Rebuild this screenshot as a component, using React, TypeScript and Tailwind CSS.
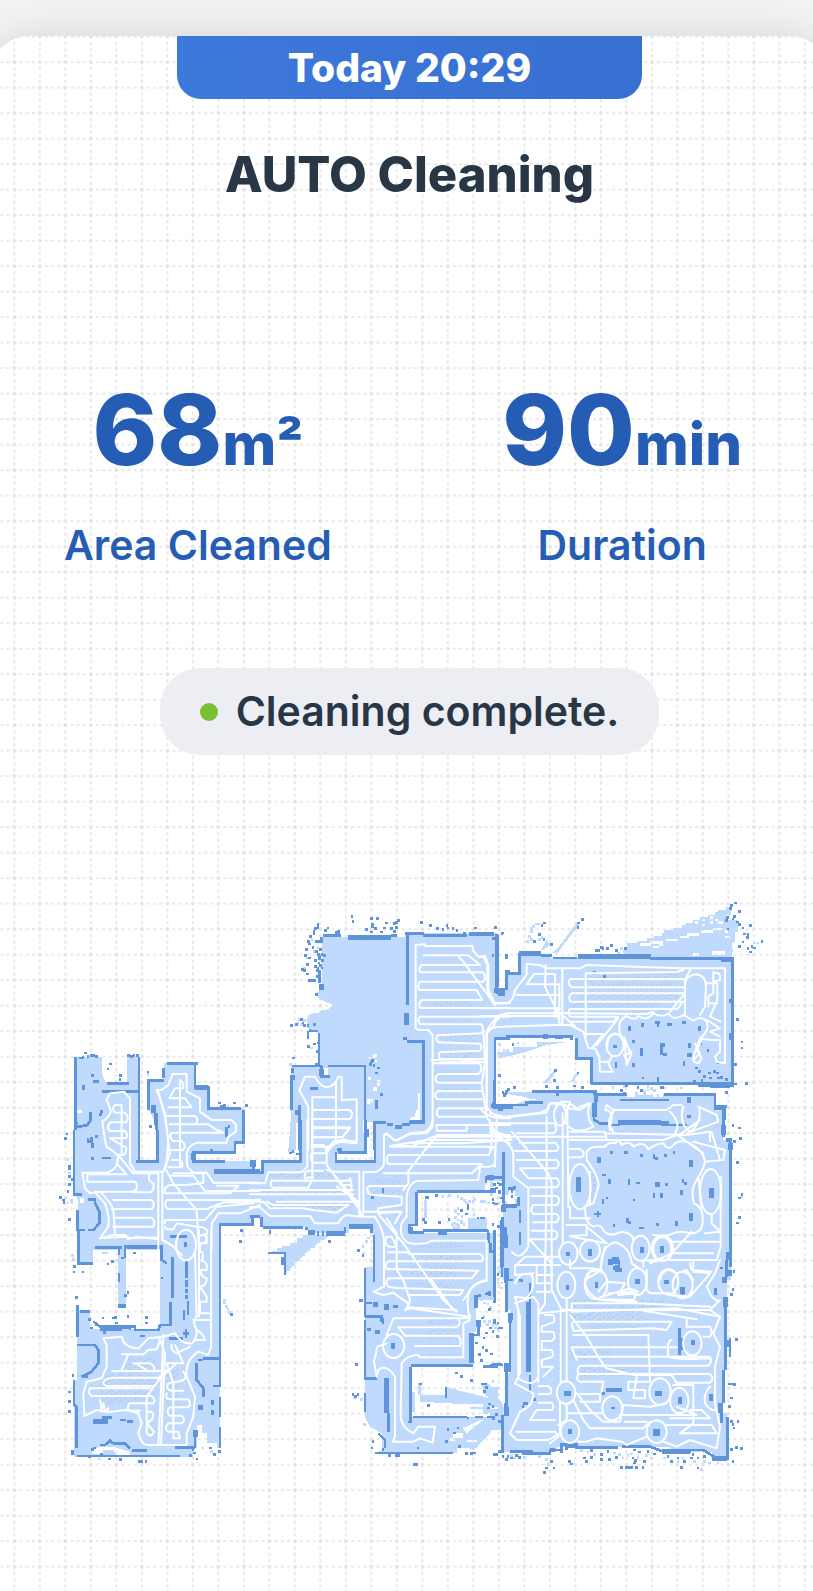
import React from "react";

type Tile = {
  x: number;
  y: number;
  floor: string;
  gaps?: string;
  walls: string;
  thick?: string;
  route: string;
  rings?: number[][];
  blocks?: number[][];
  cells?: number[][];
  haze?: number[][];
  hatch?: number[][];
};

// Every tile of the floor plan is drawn at three units per map pixel.
const tiles: Tile[] = [
  {
    x: 50,
    y: 1030,
    floor:
      "M75 82H155V130L165 155H230V82H270V394H322V290L295 235V152H343V100H435V170H475V235H580V340H555V368H430V394H610V425H660V560H612V583H510V660H80V600H85V510L75 492Z",
    gaps: "M75 240h22v8h-22zM75 595h10v8h-10zM90 505h12v14h-12zM298 285h10v30h-8z",
    walls:
      "M76 82V300M72 300V494H95M170 160H237M156 184H268M267 82V392M258 394H323V300M319 300V250M315 225v60M308 225v25M295 240V152H343M340 115v30M352 101H443M435 105V172H475V235H572M580 240V338H555V368H430V394H525M610 395v25M608 560V583M612 560H630M612 583H510V660M115 508H135V520L148 545V580L130 600H115M82 540V600H105M85 610V660M80 290H90L112 285L122 270V245M125 320v20M110 335h20M128 340v15M155 384h27M530 290v30M537 285v10M136 652H215M225 645v15M230 652H335M360 620H410M407 635v15",
    thick: "M492 424H630M435 172H475M430 370V390",
    route:
      "M97 428H170Q195 420 200 405L205 378Q190 360 170 352L165 330L157 275Q185 255 182 240L170 210L180 190L222 185L240 205V400L255 425H340L350 395L355 330L345 250L320 180M97 428L105 475L120 490L150 485Q185 520 190 540L195 615M112 430V455H255Q265 465 258 480L245 485H135M115 433H230L200 400M215 225V370M215 225H195Q182 235 195 248H225Q240 262 228 277H180Q168 292 180 303H225Q235 315 228 325H180L228 352Q230 370 220 375H205L250 430H325M190 510H305Q318 525 305 537H185M195 563H305Q318 575 310 590H190M298 435Q290 450 310 460Q315 480 300 487H245M150 625L175 590Q180 560 165 520L135 487M150 625L225 620L235 628L260 620L325 628M325 425V660M337 425V630L360 645M325 185L345 260L360 370L345 415M322 180L335 180L355 165L368 132H410V185L450 205V245L485 270H545L558 285V305L535 320L530 338H440Q415 345 410 370L412 410L430 428H470L490 458H630M390 150V410M390 150Q405 160 398 175H375L358 205H405L425 232H355M350 258H435Q450 270 435 283H360M370 283H475L500 300L520 308H365Q355 322 370 333H395Q410 345 400 360H365M365 390H390Q402 400 395 412H355M345 415L370 460L440 540L447 660M360 437H430L465 483H630M345 490Q340 470 360 465H410L460 458V430H370M345 490H540L565 467H500M350 510H630M350 510Q340 525 352 537H470L520 517H580L630 508M345 580Q340 568 355 570H465L500 530L610 520M345 590Q345 600 370 598L380 580L440 590Q475 590 472 610L450 618M485 660V580L505 550H570L630 525M470 618V640H450",
    rings: [[408, 645, 30, 46]],
    cells: [
      [103, 65], [110, 75], [120, 72], [128, 72], [135, 75], [87, 80], [95, 78], [232, 72], [240, 75], [248, 72], [258, 72],
      [123, 132], [130, 150], [138, 150], [97, 165], [97, 172], [178, 98], [170, 113], [208, 133], [206, 145], [290, 122],
      [42, 322], [47, 308], [55, 405], [55, 413], [55, 435], [62, 445], [55, 460], [50, 480], [28, 498], [36, 506], [38, 514],
      [55, 565], [505, 215], [520, 222], [510, 225], [550, 215], [585, 222], [298, 285], [480, 358], [150, 240], [570, 597],
      [568, 630], [135, 315], [110, 325], [75, 275], [148, 250], [123, 382],
    ],
    haze: [[50, 385], [55, 425], [42, 500], [50, 515], [62, 515], [60, 508], [290, 130], [530, 225], [575, 600]],
  },
  {
    x: 50,
    y: 1230,
    floor:
      "M82 0H510V655H430V680H72V450H80V240H120V298H330V55H228V225H205V55H130V100H85Z",
    gaps:
      "M125 672V660L150 650H190L240 665V675H200L190 660H160V672ZM442 585H455V610H470V640H500V655H440Z",
    walls:
      "M85 0V100H128M136 52H215M225 60V85M228 50H335V90L350 100M368 80V205M362 215V285H330L325 300H255V290H150L130 275M207 55v20M207 130v25M410 90V145M410 150v20M410 176v14M410 196v10M414 212V255M402 240v30M408 298v25M398 311h18M358 326h40M270 318h15M360 20H410M82 225V320M90 245h30M80 345H135L145 360V400L125 425L95 440H115M72 450V525L80 530V655M68 660V672H72M80 678H390M155 563h30M210 570h18M232 575h16M245 662h45M150 645H165L180 632L190 640H225L240 655M460 385H510M510 0V385M440 400V450L460 475V500M488 468H510M510 385V470M510 500v60M510 590v65M435 600V655M460 390H445M488 510v15M488 540v15M375 652h60M200 293h40M240 285v15",
    thick: "M130 575h45M205 228h22M445 532h14M150 295H215M437 600v20",
    route:
      "M150 25L190 15H225L240 25L325 22V0M337 0V30L365 45L395 75M435 70L440 260Q425 275 440 300Q440 330 425 340Q395 345 375 310L340 320L295 325L265 355Q235 355 220 335L215 320L160 325L170 345V410L155 445L110 455L100 490L103 558L140 540L165 545H180L230 540L265 550L275 580L265 610Q275 645 290 645H410V610L430 560L435 500L410 440Q405 390 445 365L475 375L483 350V0M447 0V260M447 15H465Q475 30 460 40H450V65Q465 65 455 92Q475 95 470 120H452Q450 140 470 145Q470 170 450 170L470 200V215L450 215V250H485M430 270H480M440 300Q460 310 465 330H435M340 315L335 440L325 645M328 325L345 370L333 645M187 423H330M250 400H300Q320 410 310 425M160 460Q160 445 190 443H325L350 420M160 462L170 468H310M120 475H300M120 475Q112 490 125 498H305Q320 510 310 520H238Q228 535 240 542H270M290 500L330 445L380 400M290 500V610Q305 625 312 605L295 585Q290 575 305 570Q315 555 305 545H295M235 373L215 420M215 373H280L295 360L320 358L330 330M260 402L290 420M150 510l5 30 5-20 5 25 10-10M365 345Q360 360 380 370L420 350M375 345L400 400H350M400 425Q420 450 380 455L355 460Q345 480 365 482H400M350 490Q345 508 360 508H415Q425 520 415 532H360Q345 545 360 557H395Q410 570 395 580H355Q340 595 355 605H385L390 625H370V460L350 400",
    cells: [
      [70, 105], [68, 122], [95, 122], [75, 198], [55, 482], [55, 510], [55, 541], [65, 433], [115, 265], [185, 260], [155, 260],
      [193, 258], [230, 255], [285, 258], [285, 275], [230, 183], [222, 192], [332, 140], [250, 65], [213, 80], [183, 90], [170, 98],
      [540, 250], [567, 32], [175, 683], [208, 684], [264, 691], [272, 691], [284, 691], [430, 665], [437, 683], [478, 650],
      [490, 670], [505, 660], [115, 675], [123, 655], [130, 650], [150, 670], [62, 662], [415, 650], [425, 655], [418, 672],
      [135, 280], [160, 303], [120, 290], [165, 285], [195, 275],
    ],
    haze: [[520, 208], [520, 215], [526, 226], [530, 234], [535, 243], [80, 435], [63, 73], [66, 85], [156, 65], [166, 65], [455, 650], [480, 660], [145, 683]],
    hatch: [[150, 430, 170, 90], [225, 380, 90, 40], [335, 400, 50, 130]],
  },
  {
    x: 250,
    y: 890,
    floor:
      "M215 140H465V130H742V300H780V440H735V650H780V780H370V695H350V780H115L122 700V530H207V430L170 412V392L175 375L190 370H205L215 360H230L245 350V343L232 338L205 325L200 310L215 295V250V140Z",
    gaps:
      "M350 628h18v8l-10 6h-8zM368 492h14v24h-8v-12h-8zM356 500h8v8h-8zM355 562h8v8h-8zM370 592h10v10h-10zM382 570h8v18h-8zM510 610V690H478L484 680H495L498 660H504V610ZM137 700h8v80h-8zM220 535h13v22h-10zM340 690h8v40h-8z",
    walls:
      "M220 137H272M422 137H440M465 130H522M473 130V345M520 137H650M742 135V290M769 300V245H780M458 445h12M472 454H520V698H478M372 780V697H408M410 704h20M435 712h20M455 704h20M127 528H215M235 528H345V740M127 535V550M124 560V660M215 528V560H240M207 430V525M148 645V780M140 660v15M180 596h25M208 240v40M735 655V445H780M380 630v28M262 778h15M182 423h22",
    thick:
      "M295 143H422M658 132H732M733 300H765M745 310h20M469 370v35M215 283v16M215 538v20M128 556v14M350 718v22M728 648H765M745 655h15M255 131h15",
    route:
      "M497 165V415L505 420H535L548 435V690Q540 720 525 725L480 730L435 752L410 732L402 735V780M497 165L525 163V168H668V180L685 200H700L712 225V300L730 340H780M522 196H655L690 225H515Q503 237 512 247H700Q710 262 700 275H510Q500 288 508 300H680L697 330H515Q503 342 510 354H780M625 200L640 215L735 345M780 380H510Q500 392 510 403H695Q703 417 695 430L562 436Q555 445 565 457L690 461Q698 470 690 482L570 487Q562 495 570 507H705M545 510L620 508L705 517H570M548 520H690Q700 540 685 552H565Q550 565 562 578H690M695 603H565Q548 615 562 628H695M565 655H700M565 655Q555 668 565 680H710M780 370Q740 375 730 410L710 430V650Q720 670 750 685H780M700 420L705 520L695 580L710 680L750 750M560 705H780M560 705V722H650V705M525 780L560 740H780M420 768H490L550 740M490 760H640L780 750M725 780V700M165 560H195Q210 590 230 592Q255 590 265 560H275V630L320 628V755L280 750L250 755L230 780M165 560L148 600L175 650V780M187 780V622H258M258 580V750M187 660H300Q312 672 300 687H185M187 712H300L278 742H187M187 770H240",
    cells: [
      [200, 100], [200, 108], [192, 112], [188, 120], [230, 110], [222, 118], [262, 120], [302, 75], [305, 90], [360, 82], [378, 82],
      [364, 98], [364, 106], [345, 115], [372, 112], [405, 95], [400, 110], [430, 97], [442, 87], [436, 94], [420, 112], [435, 108],
      [360, 122], [390, 122], [430, 120], [510, 93], [537, 103], [558, 112], [575, 115], [587, 103], [590, 110], [605, 112], [617, 118],
      [640, 126], [672, 110], [732, 108], [755, 125], [172, 150], [174, 158], [178, 135], [188, 127], [196, 150], [204, 150], [210, 150],
      [210, 142], [185, 168], [165, 175], [162, 193], [175, 200], [168, 220], [153, 235], [160, 238], [168, 248], [175, 268], [183, 268],
      [190, 268], [192, 225], [200, 230], [208, 222], [214, 208], [205, 195], [195, 180], [208, 175], [205, 203], [212, 190], [220, 193],
      [198, 238], [193, 208], [203, 215], [212, 230], [195, 310], [120, 402], [135, 400], [150, 385], [155, 395], [160, 403], [170, 403],
      [190, 400], [170, 423], [176, 418], [170, 432], [170, 440], [172, 465], [190, 458], [200, 455], [197, 480], [203, 500], [127, 500],
      [195, 518], [725, 192], [726, 142], [360, 512], [358, 520], [368, 522], [364, 508], [375, 545], [390, 610], [382, 530], [745, 552],
      [755, 603], [765, 600], [772, 595], [760, 612], [375, 648], [765, 192], [765, 200], [203, 245], [198, 255], [205, 262], [201, 190],
    ],
    haze: [[182, 145], [188, 180], [200, 170], [168, 200], [160, 230], [145, 385], [150, 400], [140, 395], [160, 388], [180, 470], [740, 485], [748, 490], [758, 478], [768, 478], [118, 520], [376, 502]],
    hatch: [[550, 330, 120, 26], [510, 378, 150, 10], [570, 430, 110, 30], [560, 485, 110, 30], [560, 540, 110, 10], [560, 590, 100, 10]],
  },
  {
    x: 480,
    y: 890,
    floor:
      "M0 130H50V300H80V250H120V190H180L215 205H520V205H757V585H335V505H288V440H45V650H80V605H350V612H705V655H735V690H0ZM432 182V172H440V160H470V152H500V145H523V137H545V129H553V121H580V113H607V105H615V98H638V90H660V82H683V75H706V67H714V60H737V52H752V75H737V90H775V125H765V150L755 200H440ZM218 190L240 165L290 98L298 104L250 165L232 190ZM183 180L200 150L210 165L190 180ZM50 485H100V470H170V455H270L200 465L130 488L60 505ZM190 578L222 540L230 546L200 580ZM272 575L290 548L294 556L276 578Z",
    gaps:
      "M480 160h30v-7h40v8h-36v6h-34zM520 168h16v-8h14v8h-14v7h-16zM600 137h20v-8h36v8h-28v6h-28zM558 146h36v7h-36zM664 128v-9h36v9zM700 120v-7h30v7zM645 93h9v8h-9zM667 101h8v8h-8zM668 86h8v8h-8zM690 94h8v8h-8zM706 86h8v8h-8zM690 79h10v7h-10zM713 94h16v8h-16zM735 120h8v8h-8zM755 160h8v16h-8zM735 137h16v7h-16zM640 190h18v8h-18zM695 184h40v12h-40zM80 612L130 620L150 626H185L130 634L85 650H66L75 630ZM90 215h14v24h-14z",
    walls:
      "M50 132V295M80 300V250H118V190M183 196H215M218 204H290M510 205H757M757 205V590M680 586H755M335 580H650M334 583V505H290V445M275 450V440H78M45 640V445H75M100 645H140M145 637H185M157 604H350M233 610v8M340 612H435M552 614H705V650H740M420 630H565M347 620v60M340 640v40M627 620v20M735 650v40",
    thick: "M0 132H42M42 303H75M48 305h27M118 190H183M295 199H512M722 209h40M753 328v12M753 430v20M40 643v12M50 650H100M225 441h25M190 439h15M655 585h20M690 586h60",
    route:
      "M0 200L15 198L25 225V300L45 340H80Q100 335 105 300L120 280L140 255V222L180 225L200 235H300L320 225L600 235H735V520L710 515L705 500L720 485V450H690L660 445L640 500Q635 515 655 520L665 505L650 480L665 450M420 430Q410 390 440 378Q465 395 475 378Q500 395 520 370Q550 385 565 370Q580 395 610 375L640 392Q665 375 680 395Q690 420 665 440M420 430L435 470L440 525L455 490L430 450M432 440L450 490L432 495L445 515M645 460L660 490L640 510M385 520L398 545H360L358 500L345 475H325L310 425L270 405H230L65 410Q25 410 20 430V660M0 355H240M0 378H230M20 425Q30 400 60 375L80 370H270L500 372L520 365M140 283L162 252H225V380M140 283H240M110 315H240M197 225L195 290L230 360L240 405M247 235V405M238 285V400M317 250V440M317 250L590 246L610 240M340 470L370 432H320M350 465L415 385M270 267H610M270 267Q260 280 275 292H612M612 310H275Q262 322 272 335H610M605 335Q600 352 590 357H270Q262 365 270 380H415L400 395H270M240 370L285 408M615 375V280Q620 255 650 253Q680 260 678 290L675 350L660 375M570 365L615 310V270L630 240M700 245V310L685 320V350M700 250Q720 245 720 260V270L705 275M680 280H712V330L690 380L722 395M690 340H712M680 390L720 415L690 425L720 440M0 655Q20 680 50 683L180 668L200 660L210 640L245 640L265 650L270 640L290 655L325 640M360 515H385M380 480L385 445Q400 425 420 435M395 500L385 520",
    rings: [[405, 465, 26, 34]],
    blocks: [
      [445, 407, 8, 16], [483, 400, 8, 10], [525, 393, 14, 8], [530, 403, 8, 8], [561, 400, 14, 8], [605, 393, 14, 8], [655, 408, 8, 16],
      [398, 466, 14, 8], [455, 450, 10, 8], [480, 475, 8, 24], [541, 460, 14, 10], [541, 470, 8, 26], [549, 490, 12, 8], [625, 460, 8, 14],
      [655, 450, 10, 14], [622, 490, 14, 10], [404, 517, 8, 16], [457, 520, 8, 12], [608, 512, 8, 16], [530, 560, 8, 16], [485, 560, 8, 8],
      [340, 243, 8, 8], [355, 245, 8, 8], [370, 255, 8, 8],
    ],
    cells: [
      [42, 108], [62, 127], [35, 192], [38, 142], [190, 95], [182, 103], [175, 130], [160, 150], [188, 145], [303, 85], [292, 95], [290, 108],
      [210, 160], [345, 178], [352, 178], [360, 168], [365, 172], [378, 172], [390, 162], [405, 178], [432, 172], [762, 35], [750, 42],
      [748, 52], [775, 60], [738, 78], [735, 88], [755, 83], [760, 75], [768, 92], [775, 100], [785, 110], [790, 128], [800, 130], [808, 103],
      [798, 138], [785, 152], [775, 165], [812, 165], [820, 170], [842, 150], [808, 182], [800, 172], [740, 113], [768, 385], [782, 452],
      [755, 462], [782, 470], [762, 520], [95, 460], [223, 537], [55, 552], [290, 545], [220, 568], [303, 588], [228, 588], [65, 603],
      [72, 608], [420, 598], [480, 598], [430, 605], [545, 588], [735, 603], [565, 575], [645, 530], [655, 540], [670, 555], [685, 545],
      [700, 540], [708, 545], [710, 515], [680, 478], [720, 558], [735, 565], [662, 568], [688, 560], [640, 570], [712, 560],
    ],
    haze: [[165, 98], [172, 98], [157, 105], [150, 112], [150, 120], [145, 135], [138, 150], [150, 145], [182, 138], [175, 145], [430, 180], [420, 172], [412, 185], [480, 596], [490, 600], [500, 596], [520, 598], [465, 606], [395, 588], [820, 155], [830, 155], [55, 460], [110, 455], [80, 600], [550, 590]],
    hatch: [[400, 240, 200, 20], [320, 258, 270, 14], [330, 280, 260, 10], [300, 300, 300, 30], [270, 335, 270, 22], [460, 355, 110, 16]],
  },
  {
    x: 250,
    y: 1120,
    floor:
      "M0 158H38V125H152V0H347V98H258V125H372V0H780V60H758V182H705V213H500V313H480V340H735V540H345V440H370V318H298V340H175V322H38V290H0ZM160 345H240L232 353H225V360H210V368H202V376H195V384H180V392H172V399H165V407H157V415H150V422H142V430H134V438H126V445H119V453H112V462H105V400H65V392H80V384H95V377H120V370H142V353H160ZM655 295H710V328H655ZM523 240h8v55h-8zM115 95L122 0H130V95ZM760 90H780V540H765Z",
    walls:
      "M0 125h15v15M0 158H38V125H152V0M375 7V125H258V95M265 98H347V0M372 7H405M410 14h20M435 20h20M460 14h20M480 4h40M760 95V250M757 290V440M708 190V172H755M500 215H735V205M500 215V315M480 318V338H523M525 332H710M714 330V370M722 370v30M735 330V540M0 290H30M35 290V322M40 322H160M60 330v12M170 320v10M285 340V320M372 345V485M345 445V540M55 399H105V465M97 410v25",
    thick: "M175 338H195M200 340h6M215 340h8M228 340h57M298 320H368M565 338h25M350 30v20M760 255v22M768 345v40M482 320v16M710 172h22M8 128v14",
    route:
      "M0 190H45L55 157H155L172 140V0M187 0V165M187 75H220Q235 90 225 100H187M187 25H300L275 52H187M185 100Q178 120 190 128H225M258 0V65M320 0V70L270 65Q235 75 230 105V135L340 285M230 150L245 155H328V285M340 155V275H450M340 157L380 155Q400 145 402 130V45L410 40Q430 60 440 62L480 42L530 40L548 20V0M65 182H300M65 182Q58 195 68 203H175L190 170L165 175Q160 155 175 152H220M0 210H310M0 223H310M300 175Q310 200 300 215M265 185L300 180M270 195H305M260 200L325 245H80M0 245H40L60 265H160L190 270L260 278L295 255H70L50 245M0 262H30L60 288H180L195 310H265Q275 290 290 285L330 290L375 290Q400 330 402 360V500L370 515L400 525L430 518L460 540M240 150L320 245L335 290M355 215Q345 205 360 198H470M355 215Q350 222 370 225L455 230V255L385 265Q380 280 400 300L460 370L580 540M385 280L455 275L440 300L435 310M410 295L440 340V450L460 480L480 540M410 350H425L440 380H415Q400 370 410 350M400 160H665L695 132H415Q405 120 415 105H715Q725 95 720 80H420M420 78L530 60H780M470 160L560 45H780M740 0L735 135L720 140H690L685 180L500 183Q475 190 470 230V290Q445 310 455 345Q465 370 490 372L530 370L545 362H710V480Q670 485 655 520L640 540M475 165V190L460 210M415 397H470L490 407M485 402H690Q705 412 695 424H415M415 424Q400 435 412 447L685 452L665 475H415Q403 490 415 500L440 504L640 510L630 525H480M720 0L725 40L780 70",
    blocks: [[395, 203, 8, 16]],
    cells: [
      [234, 360], [322, 388], [335, 402], [525, 228], [530, 228], [516, 295], [523, 303], [565, 303], [593, 295], [555, 222], [650, 253],
      [650, 262], [645, 278], [630, 268], [680, 290], [690, 290], [698, 290], [727, 245], [363, 228], [328, 537], [708, 515], [685, 522],
      [715, 520], [117, 95], [125, 90], [138, 98], [740, 185], [748, 190], [745, 210], [730, 190],
    ],
    haze: [[620, 262], [612, 270], [622, 278], [632, 285], [612, 288], [620, 296], [630, 300], [610, 305], [622, 312], [604, 310], [638, 310], [612, 320], [640, 238], [630, 232], [645, 245], [620, 225], [655, 240], [665, 240], [670, 235], [690, 240], [700, 240], [712, 245], [668, 280], [575, 225], [595, 222], [745, 440], [745, 455], [740, 475], [750, 485], [345, 360], [352, 350]],
    hatch: [[60, 160, 210, 12], [30, 206, 270, 18], [60, 240, 230, 30], [370, 178, 80, 12], [370, 210, 80, 16], [490, 365, 150, 20], [490, 400, 150, 22], [480, 430, 140, 40], [490, 490, 130, 20]],
  },
  {
    x: 350,
    y: 1220,
    floor:
      "M72 0H178V38H435V210L405 215L378 225V335H362V437H182V590H430V600L400 650L380 685H320V700H75L95 690V640L60 620L45 590V145H70ZM210 525H285V500L330 512L400 530L455 545L465 575L400 582V552H330L210 545ZM395 490H415L440 525L455 550H430L400 520ZM183 515h12v60h-12zM390 600H440L420 640L370 690L345 680ZM204 490h10v35h-10zM360 562h80v6h-80z",
    gaps: "M310 640h30v14h-30zM340 625L390 600H400L350 640ZM300 655h16v8h-16zM350 660h30v7h-30zM325 685h14v8h-14z",
    walls:
      "M0 18H65V40M72 45V185M45 145V290M45 290H95V305M45 300V475H82M45 520V575M178 38V15H200V0M220 31H415M415 38V70M422 70v30M435 50V235M385 300V345H370M182 437H370M400 440H435M435 434H455M182 440V605M190 591H350M375 591h25M410 591h20v8M455 0V140M480 280V455M470 455V585M457 590V700M475 180h15M115 580V635M75 699H310M85 640L105 660V685M130 699h20M288 500v35M392 492h20",
    thick: "M0 20H65M378 225V265M385 300V320M364 340V428M110 475V580M265 38h25M468 150v40M135 704h15M180 602v6M480 280v30M470 560v28",
    route:
      "M160 240Q185 250 165 270L180 265L360 290M170 262L320 270M130 295H360V285M130 295L110 345M145 322L165 347H325Q335 362 330 378H195M145 322H320Q335 310 325 295M110 370L82 380L72 425L80 470L85 450Q110 430 135 470V650L128 665H190L210 655L248 668L255 620L205 620L190 640Q150 620 152 580L155 430Q170 405 205 405L210 412H340V310L360 300Q345 240 360 210Q380 185 410 183M180 240L175 262M280 240L320 275M245 180L310 272",
    rings: [[131, 378, 32, 36]],
    blocks: [[70, 246, 14, 14], [103, 253, 14, 16], [130, 255, 14, 8], [122, 370, 14, 16], [75, 330, 14, 12], [50, 325, 14, 8], [45, 245, 20, 8], [95, 295, 8, 16]],
    cells: [
      [22, 88], [32, 238], [15, 430], [5, 520], [20, 520], [12, 525], [62, 680], [65, 660], [200, 680], [190, 730], [196, 730], [290, 625],
      [286, 660], [320, 620], [310, 635], [325, 675], [345, 697], [370, 695], [360, 697], [405, 218], [415, 212], [430, 240], [415, 265],
      [393, 290], [430, 298], [418, 320], [450, 320], [440, 305], [405, 335], [395, 378], [405, 388], [420, 398], [385, 400], [390, 418],
      [375, 365], [398, 350], [330, 465], [315, 455], [360, 478], [208, 488], [232, 553], [405, 498], [400, 510], [430, 700], [445, 690],
      [115, 703], [415, 548], [412, 560], [425, 555], [95, 685], [455, 705], [350, 590], [435, 700],
    ],
    haze: [[410, 248], [418, 258], [400, 300], [408, 310], [415, 300], [425, 310], [433, 320], [398, 285], [390, 235], [400, 245], [445, 150], [450, 165], [440, 185], [450, 200], [40, 610], [35, 75], [38, 95], [10, 530], [330, 5], [315, 10], [322, 18], [308, 18], [30, 535], [425, 480], [440, 500]],
    hatch: [[230, 295, 100, 16], [230, 320, 90, 40], [220, 372, 110, 10], [230, 400, 90, 10], [190, 262, 120, 10]],
  },
  {
    x: 490,
    y: 1080,
    floor:
      "M0 80H60V70L120 65L150 60V40H675V85H700V180H722V600H38V375H45V290H0ZM0 300h8v20h-8z",
    gaps:
      "M60 325h8v8h8v16h8v8h-8v18H52V362h-6V345h10ZM410 40H520V50H490V44H435V50H410ZM680 85h8v8h-8z",
    walls:
      "M12 0V75M50 75H110V68H158M127 34H320M320 43H410M522 43H675V85H700V170M390 60H536M302 10H720V20M312 70V120L330 130H360M362 135H390M535 135H590M722 175V560M42 215V375M0 292H40M85 350V378M90 390V430M90 455V495M36 505V590M14 450V600M55 325h20",
    thick: "M5 72h12M10 80h40M645 13h75M312 72v24M318 45v20M385 128H512M512 130h25M597 50v20M597 105v10M700 135v30M708 180h14M722 190v20M715 515V540M718 570v18M35 378H80M44 440V505M265 290V335M664 325v30M50 565v35M8 325v10",
    route:
      "M0 100L50 112L170 98L180 70L205 72L215 65H240L235 85L270 90L300 70Q285 110 310 140Q250 170 225 125M0 130H200M0 155Q30 155 50 170H340M0 145L65 180M65 155L175 280L185 310V600M0 180H40Q70 200 70 225V290L115 325V500Q90 545 65 515M0 205L15 200V260M170 110V290L165 600M218 100V490M232 80L235 380M80 160H190Q205 150 195 135M90 188H195Q212 200 200 213H75M80 240H200Q212 252 200 265H90L115 295H200Q215 308 200 322H120M125 348H200Q215 360 200 375H130Q118 390 130 402H200Q212 412 200 427H130M125 452H195Q210 465 195 478H120M120 480L190 555M75 560L105 530H210M75 555H210M75 555V585L130 580M240 155H345L350 180H240M240 207H270Q290 220 275 232H235M290 215Q300 200 320 200L345 200Q355 185 375 190Q390 175 395 195Q420 180 430 200Q460 180 475 208Q500 190 520 190Q535 215 550 195Q570 175 600 190Q640 210 645 245Q640 270 620 300Q600 330 612 370Q640 380 638 420Q640 460 600 460Q570 450 550 460Q530 470 490 465M290 215L290 240L310 270Q330 310 325 320L310 370L285 380Q285 430 310 440Q330 430 340 450Q355 475 395 455Q430 460 430 480M335 580Q325 500 375 487Q420 500 425 550L470 580V600M335 570L285 600M345 500L330 570L300 575L290 600M300 275V370M625 290L635 380M645 245L700 240L705 210L610 185M660 185V155L590 165L345 160M345 180H520L575 160L630 120M625 80L680 105L685 125L590 160M665 155L690 240M575 75H550L530 90H370L350 75L345 90Q375 90 360 140L370 155M540 95Q575 130 555 160L640 220M370 95Q350 120 360 150M580 80Q565 130 600 155Q635 130 628 85M692 290V500L680 540H480M545 485H690M550 520H670M605 455L545 520L480 550M645 460L690 455L665 430V405M240 380V415H300M230 435H290V465L240 468M245 470L350 490L290 440M460 560V540L500 545M510 600Q515 570 540 570L560 580L590 570L610 600M600 550L605 570L665 575",
    rings: [[270, 320, 32, 68], [662, 335, 32, 68], [300, 512, 30, 32], [452, 505, 27, 38], [517, 505, 32, 38], [517, 507, 27, 36], [235, 520, 28, 34], [210, 105, 18, 32]],
    blocks: [
      [361, 213, 8, 8], [403, 213, 12, 8], [322, 232, 12, 16], [450, 222, 8, 8], [488, 222, 8, 16], [496, 231, 8, 8], [522, 222, 10, 8],
      [548, 213, 8, 8], [597, 240, 12, 20], [335, 282, 14, 6], [355, 298, 8, 14], [413, 298, 8, 16], [437, 305, 12, 8], [495, 305, 15, 15],
      [525, 310, 8, 8], [575, 298, 8, 10], [583, 306, 8, 8], [488, 340, 8, 14], [510, 340, 8, 14], [347, 350, 8, 8], [335, 358, 8, 14],
      [430, 357, 6, 6], [570, 330, 10, 14], [320, 392, 8, 20], [313, 398, 20, 8], [408, 415, 8, 14], [414, 423, 8, 8], [598, 400, 10, 22],
      [370, 432, 6, 8], [448, 440, 14, 8], [498, 430, 10, 8], [555, 423, 8, 14], [293, 507, 14, 20], [450, 500, 12, 20], [510, 498, 12, 22],
      [228, 515, 12, 14], [355, 538, 14, 16], [365, 532, 22, 10], [383, 540, 8, 16], [375, 565, 22, 12], [370, 558, 10, 12],
    ],
    cells: [
      [725, 133], [745, 140], [748, 172], [730, 180], [738, 243], [752, 340], [745, 350], [745, 408], [738, 425], [728, 570], [732, 8],
      [765, 6], [70, 18], [165, 16], [250, 14], [200, 40], [5, 325], [15, 320], [25, 335], [5, 355], [15, 368], [30, 350], [62, 330],
      [62, 345], [70, 318], [5, 430], [8, 455], [22, 435], [20, 580], [690, 560], [705, 545], [440, 18], [405, 12], [0, 510], [510, 18],
    ],
    haze: [[400, 15], [470, 15], [480, 22], [460, 40], [500, 42], [570, 20], [20, 350], [10, 370], [0, 340], [22, 365], [20, 560], [750, 345]],
    hatch: [[610, 185, 90, 12], [675, 220, 25, 30], [295, 280, 25, 95], [610, 310, 15, 65], [670, 105, 18, 40], [345, 150, 60, 8]],
  },
  {
    x: 490,
    y: 1260,
    floor:
      "M38 0H722L710 20V330H700V460H712V590H665V575H540V560H200V575H38V460H48V340H60V150H48V0ZM0 380H25V450H38V510H0Z",
    gaps: "M0 440h25v8h-25z",
    walls:
      "M50 25V155M60 160V335M50 335V460M38 465V580M60 575H100V580H180V570H215V553H260V562H385M395 560H480L520 575H600V570H640L680 595H712V470M695 460V490M700 330V430M707 130V330M720 235V290M710 0V50M120 70V125M120 345V400M12 0V110M340 395v10M568 205V285M0 315H38",
    thick: "M48 28v20M116 125V335M48 430v30M105 577h25M180 570h15M225 557h35M515 575h85M665 595H712M692 430V460M707 110V140M712 240v22M703 50v20M347 390H395M572 235v35M578 80v22M5 317h20M62 160v20M50 310v25",
    route:
      "M75 70Q90 30 125 45Q140 80 110 115L75 110L90 170V340L75 370L130 400Q130 440 90 455L60 520L80 540H175L210 520M265 545L290 545L320 535L395 545L410 555L470 530M520 545L560 560L600 540L680 565L690 500L675 430V320L690 260L670 220L690 170L660 150L690 120M85 155V350M75 130L130 110L145 130V350Q130 385 85 355M140 45H190M140 20V70H180M140 95H180M165 0V130L145 160V365M165 165H190Q200 190 180 190L155 200V215H190Q200 240 180 243H155V270H185Q195 290 180 293L155 300V320H190L160 350M145 378H175Q190 390 180 402H145M145 428H185Q195 440 185 450H140L120 480H195M80 515H195L205 530L180 550M185 0V90L215 150H660M212 160V365M230 115V365M210 425V525M230 430V480L205 495M150 160L245 150M245 130H440L660 140M245 130V155L560 145L690 170M250 185H545L530 210L490 205L250 212L245 190M250 225H475L480 365M245 262H560M245 262L260 300V290H560M260 290H660Q668 305 655 317H270Q258 330 265 342H660Q675 355 660 368H560M265 342Q255 360 270 365H340L335 395M240 165L290 230L330 300L350 325L430 345H545L560 370M440 350L430 415H465V390H415V365H480M270 402H330V425H270M260 400L300 450L340 485H390L400 435L480 440L530 430M230 460H340M390 465H620L560 440M405 485H470M250 420L280 480L300 505H460L480 485M540 475H660L635 450H600M530 495H665L680 520H570L610 490V375H550M590 180V200H660Q670 215 660 230H640M545 240Q530 240 535 290Q550 300 660 295M325 95L350 65L405 70L385 105L440 100L430 120L340 118M535 105L600 110L660 40L610 35V0M285 60Q285 100 330 120L440 125M240 0V25H310M470 30V90L480 100H540M650 80L665 110L685 125M650 80L675 40L690 0M660 380Q640 400 645 430Q660 455 680 450M355 100L430 95M330 112L420 85L445 95M460 152L620 178",
    rings: [[229, 75, 27, 40], [318, 72, 34, 45], [442, 65, 28, 40], [535, 65, 30, 38], [578, 75, 30, 40], [607, 250, 28, 36], [510, 395, 32, 40], [568, 422, 28, 38], [367, 445, 30, 36], [228, 398, 28, 34], [240, 515, 28, 34], [500, 515, 30, 34]],
    blocks: [
      [87, 58, 12, 8], [228, 75, 8, 16], [315, 65, 8, 20], [435, 58, 16, 14], [523, 60, 14, 12], [672, 85, 10, 20], [602, 240, 14, 14],
      [222, 393, 20, 14], [233, 508, 12, 14], [362, 440, 14, 8], [495, 392, 20, 15], [565, 410, 12, 22], [657, 402, 12, 22],
      [488, 508, 22, 20], [98, 425, 16, 10], [355, 0, 32, 12], [375, 14, 16, 22], [575, 80, 8, 24],
    ],
    cells: [
      [160, 633], [165, 620], [188, 620], [235, 600], [240, 608], [300, 588], [330, 580], [355, 595], [375, 588], [430, 605], [425, 590],
      [432, 597], [460, 600], [540, 600], [600, 590], [580, 600], [390, 618], [405, 618], [412, 618], [420, 618], [435, 618], [455, 618],
      [570, 618], [620, 620], [725, 600], [750, 562], [735, 558], [720, 565], [720, 410], [740, 480], [735, 235], [730, 370], [715, 368],
      [720, 368], [725, 85], [720, 100], [180, 600], [280, 590], [285, 600], [10, 185], [25, 200], [18, 225], [5, 210], [15, 460],
      [25, 480], [50, 585], [60, 590], [75, 582], [85, 588], [45, 595], [100, 425], [130, 415], [95, 435], [720, 480], [725, 490], [728, 500],
      [715, 435], [560, 590], [210, 570], [330, 595], [400, 555], [430, 566], [445, 572], [470, 570], [490, 578], [350, 570], [300, 568],
      [605, 580], [620, 590], [640, 585], [530, 585], [225, 562],
    ],
    haze: [[60, 582], [70, 590], [80, 582], [100, 588], [145, 585], [165, 595], [170, 610], [270, 568], [290, 572], [310, 580], [370, 575], [385, 580], [395, 590], [410, 582], [420, 578], [440, 588], [465, 582], [480, 590], [560, 600], [575, 592], [610, 600], [520, 590], [640, 600], [655, 605], [5, 192], [15, 190], [20, 205], [680, 605], [630, 625]],
    hatch: [[240, 120, 290, 24], [240, 155, 220, 30], [300, 195, 170, 16], [240, 250, 230, 12], [240, 270, 120, 30], [270, 318, 230, 32], [205, 160, 15, 200]],
  },
];

const squares = (points: number[][]) => points.map(([x, y]) => `M${x} ${y}h8v8h-8z`).join("");
const boxes = (items: number[][]) => items.map(([x, y, w, h]) => `M${x} ${y}h${w}v${h}h-${w}z`).join("");
const place = (tile: Tile) => `translate(${tile.x} ${tile.y}) scale(0.33333)`;

function FloorPlan() {
  return (
    <svg viewBox="0 880 813 600" className="block w-full" role="img" aria-label="Cleaning map">
      <defs>
        <mask id="gaps" maskUnits="userSpaceOnUse" x="0" y="880" width="813" height="600">
          <rect x="0" y="880" width="813" height="600" fill="#fff" />
          {tiles.map((t, i) => (
            <path key={i} transform={place(t)} d={t.gaps ?? ""} fill="#000" shapeRendering="crispEdges" />
          ))}
        </mask>
        <pattern id="hatch" width="29" height="16" patternUnits="userSpaceOnUse">
          <path d="M2 7l4-4M12 6l3-3M20 14l5-6M8 15l3-3" stroke="#8798b8" strokeWidth="1.5" fill="none" />
        </pattern>
      </defs>
      <g mask="url(#gaps)" fill="#bfdafc" shapeRendering="crispEdges">
        {tiles.map((t, i) => (
          <path key={i} transform={place(t)} d={t.floor} />
        ))}
      </g>
      <g fill="#bfdafc" shapeRendering="crispEdges">
        {tiles.map((t, i) => (
          <path key={i} transform={place(t)} d={squares(t.haze ?? [])} />
        ))}
      </g>
      {tiles.map((t, i) => (
        <path key={i} transform={place(t)} d={boxes(t.hatch ?? [])} fill="url(#hatch)" />
      ))}
      <g fill="none" stroke="#5f93da" shapeRendering="crispEdges">
        {tiles.map((t, i) => (
          <g key={i} transform={place(t)}>
            <path d={t.walls} strokeWidth="8" />
            <path d={t.thick ?? ""} strokeWidth="14" />
            <path d={squares(t.cells ?? []) + boxes(t.blocks ?? [])} fill="#5f93da" stroke="none" />
          </g>
        ))}
      </g>
      <g fill="none" stroke="#fff" strokeLinejoin="round" strokeLinecap="round">
        {tiles.map((t, i) => (
          <g key={i} transform={place(t)} strokeWidth="6">
            <path d={t.route} />
            {(t.rings ?? []).map(([cx, cy, rx, ry], k) => (
              <ellipse key={k} cx={cx} cy={cy} rx={rx} ry={ry} />
            ))}
          </g>
        ))}
      </g>
    </svg>
  );
}

function GridPaper() {
  return (
    <svg className="absolute inset-0 h-full w-full" aria-hidden="true">
      <defs>
        <pattern id="paper" x="8.6" y="-12.1" width="25.5" height="25.5" patternUnits="userSpaceOnUse">
          <path
            d="M12.75 -1.6V27M-1.6 12.75H27"
            stroke="#e4e4e4"
            strokeWidth="1.6"
            strokeDasharray="3.4 2.975"
            strokeDashoffset="-0.07"
            fill="none"
          />
          <circle cx="12.75" cy="12.75" r="1.9" fill="#e4e4e4" />
        </pattern>
      </defs>
      <rect width="100%" height="100%" fill="url(#paper)" />
    </svg>
  );
}

function Stat({ value, unit, label }: { value: string; unit: string; label: string }) {
  return (
    <div className="flex flex-col items-center text-[#265db4]">
      <p className="text-[98px] leading-[96px] font-extrabold whitespace-nowrap">
        {value}
        <span className="text-[58px] leading-none">{unit}</span>
      </p>
      <p className="mt-[43px] text-[41px] leading-[48px] font-semibold whitespace-nowrap">{label}</p>
    </div>
  );
}

export default function App() {
  return (
    <div className="flex min-h-screen flex-col overflow-hidden bg-[#f2f3f5] pt-9 font-['Inter','Liberation_Sans',sans-serif]">
      <main className="relative -mr-[13px] -ml-[7px] flex flex-1 flex-col overflow-hidden rounded-t-[35px] bg-white shadow-[0_0_44px_rgba(0,0,0,0.12)]">
        <GridPaper />
        <div className="relative flex flex-1 flex-col">
          <div className="flex flex-col items-center">
            <time className="flex h-[63px] w-[465px] max-w-full items-center justify-center rounded-b-[24px] bg-linear-to-r from-[#3d78db] to-[#3770d0] text-[39px] leading-[60px] font-extrabold text-white">
              Today 20:29
            </time>
            <h1 className="mt-[46px] text-[49px] leading-[60px] font-extrabold text-[#283645]">AUTO Cleaning</h1>
          </div>
          <section className="mt-[177px] flex justify-between pr-[84px] pl-[71px]">
            <Stat value="68" unit="m²" label="Area Cleaned" />
            <Stat value="90" unit="min" label="Duration" />
          </section>
          <div className="mt-[99px] flex justify-center">
            <p className="flex h-[87px] items-center gap-[18px] rounded-[40px] bg-[#edeef4] px-10 text-[41px] leading-none font-semibold whitespace-nowrap text-[#283645]">
              <span className="size-[18px] rounded-full bg-[#7bbf35]" />
              Cleaning complete.
            </p>
          </div>
          <div className="mt-[125px] pr-[13px] pl-[7px]">
            <FloorPlan />
          </div>
        </div>
      </main>
    </div>
  );
}
